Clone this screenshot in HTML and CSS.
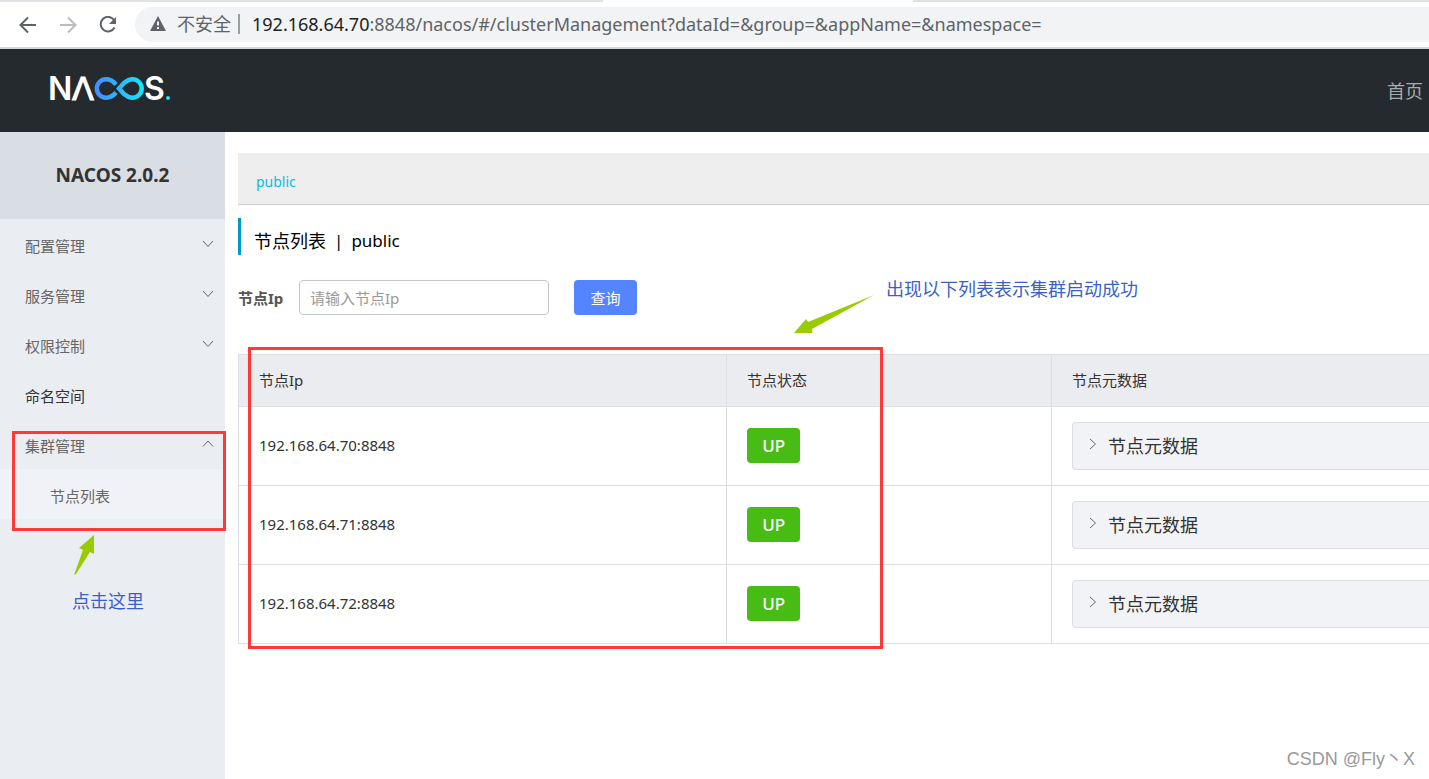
FILE: index.html
```html
<!DOCTYPE html>
<html lang="zh-CN">
<head>
<meta charset="utf-8">
<title>Nacos</title>
<link rel="stylesheet" href="styles.css">
</head>
<body>
<div class="browser">
  <div class="tab-strip"><span class="tab-side tab-left"></span><span class="tab-active"></span><span class="tab-side tab-right"></span></div>
  <div class="toolbar">
    <div class="nav-buttons">
      <button class="nav-button" aria-label="后退"><svg width="18" height="18" viewBox="0 0 18 18"><path d="M17 9H2M9 1.500L1.500 9L9 16.500"/></svg></button>
      <button class="nav-button disabled" aria-label="前进" disabled><svg width="18" height="18" viewBox="0 0 18 18"><path d="M1 9H16M9 1.500L16.500 9L9 16.500"/></svg></button>
      <button class="nav-button" aria-label="刷新"><svg width="20" height="18" viewBox="0 0 20 18"><path d="M15 4A7.300 7.300 0 1 0 15.500 11.500"/><path class="solid" d="M17 1V8H10Z"/></svg></button>
    </div>
    <div class="omnibox">
      <svg class="warning" width="16" height="15" viewBox="0 0 16 15"><path d="M8 0L16 15H0Z" fill="#5f6368"/><path d="M8 5.500V9.500M8 11V13" stroke="#f1f3f4" stroke-width="2"/></svg>
      <span class="insecure">不安全</span>
      <span class="divider"></span>
      <span class="url"><span class="host">192.168.64.70</span>:8848/nacos/#/clusterManagement?dataId=&amp;group=&amp;appName=&amp;namespace=</span>
    </div>
  </div>
</div>
<header class="header">
  <svg class="logo" width="130" height="41" viewBox="-4 -7 130 41" role="img" aria-label="NACOS.">
    <defs><linearGradient id="loop" x1="46" y1="0" x2="95" y2="0" gradientUnits="userSpaceOnUse"><stop offset="0" stop-color="#478aff"/><stop offset="1" stop-color="#13e8f7"/></linearGradient></defs>
    <text class="logo-text" x="-1" y="23">N</text>
    <text class="logo-text wide" x="23" y="23">Λ</text>
    <path d="M67 7.500C64 4 61 2.300 57 2.300A9.200 9.200 0 0 0 57 20.700C61 20.700 64 19 67 15.500M70 11.500L75 6C78 3.500 80 2.300 83.500 2.300A9.200 9.200 0 0 1 83.500 20.700C80 20.700 78 19.500 75 17Z" fill="none" stroke="url(#loop)" stroke-width="4.500"/>
    <text class="logo-text" x="95" y="23">S</text>
    <circle cx="119" cy="21" r="2" fill="#13e8f7"/>
  </svg>
  <a class="home-link" href="#">首页</a>
</header>
<div class="layout">
  <aside class="sidebar">
    <h1 class="product">NACOS 2.0.2</h1>
    <nav class="menu">
      <button class="menu-item">配置管理<svg class="chevron" width="12" height="8" viewBox="0 0 12 8"><path d="M1 1L6 6.500L11 1"/></svg></button>
      <button class="menu-item">服务管理<svg class="chevron" width="12" height="8" viewBox="0 0 12 8"><path d="M1 1L6 6.500L11 1"/></svg></button>
      <button class="menu-item">权限控制<svg class="chevron" width="12" height="8" viewBox="0 0 12 8"><path d="M1 1L6 6.500L11 1"/></svg></button>
      <a class="menu-item leaf" href="#">命名空间</a>
      <button class="menu-item">集群管理<svg class="chevron" width="12" height="8" viewBox="0 0 12 8"><path d="M1 6.500L6 1L11 6.500"/></svg></button>
      <a class="menu-item child" href="#">节点列表</a>
    </nav>
    <div class="mark mark-menu"></div>
    <svg class="arrow arrow-menu" width="22" height="42" viewBox="0 0 22 42"><path d="M20 0L5 13L9 15L0 40L2 39L16 17L20 19Z"/></svg>
    <p class="note note-menu">点击这里</p>
  </aside>
  <main class="main">
    <div class="namespaces"><a class="namespace" href="#">public</a></div>
    <h2 class="page-title"><span class="page-name">节点列表</span><span>|</span><span>public</span></h2>
    <form class="filter">
      <label class="filter-label" for="ip">节点Ip</label>
      <input class="filter-input" id="ip" type="text" placeholder="请输入节点Ip">
      <button class="search" type="button">查询</button>
    </form>
    <div class="table-area">
      <table class="nodes">
        <thead><tr><th class="col-ip">节点Ip</th><th class="col-state">节点状态</th><th>节点元数据</th></tr></thead>
        <tbody>
          <tr><td>192.168.64.70:8848</td><td><span class="state">UP</span></td><td class="meta-cell"><button class="meta"><svg class="chevron" width="8" height="12" viewBox="0 0 8 12"><path d="M1 1L6.500 6L1 11"/></svg>节点元数据</button></td></tr>
          <tr><td>192.168.64.71:8848</td><td><span class="state">UP</span></td><td class="meta-cell"><button class="meta"><svg class="chevron" width="8" height="12" viewBox="0 0 8 12"><path d="M1 1L6.500 6L1 11"/></svg>节点元数据</button></td></tr>
          <tr><td>192.168.64.72:8848</td><td><span class="state">UP</span></td><td class="meta-cell"><button class="meta"><svg class="chevron" width="8" height="12" viewBox="0 0 8 12"><path d="M1 1L6.500 6L1 11"/></svg>节点元数据</button></td></tr>
        </tbody>
      </table>
      <div class="mark mark-table"></div>
      <svg class="arrow arrow-table" width="80" height="40" viewBox="0 0 80 40"><path d="M0 38L12 24L14 27L80 0L18 34L18.500 38Z"/></svg>
      <p class="note note-table">出现以下列表表示集群启动成功</p>
    </div>
  </main>
</div>
<div class="watermark">CSDN @Fly丶X</div>
</body>
</html>
```
FILE: styles.css
```css
* { box-sizing: border-box; }
body {
  margin: 0;
  min-height: 100vh;
  display: flex;
  flex-direction: column;
  overflow-x: hidden;
  background: #fff;
  color: #333;
  font: 15px/20px "Noto Sans", "Noto Sans CJK SC", sans-serif;
}
button, input { font: inherit; }
button { border: 0; cursor: pointer; }
a { text-decoration: none; }

.browser { background: #fff; border-bottom: 2px solid #d5d7da; }
.tab-strip { display: flex; height: 2px; }
.tab-side { background: #dee1e6; }
.tab-left { flex: 603; }
.tab-active { flex: 310; }
.tab-right { flex: 516; }
.toolbar { display: flex; padding: 5px 0; }
.nav-buttons { display: flex; align-items: center; gap: 22px; padding-left: 19px; width: 135px; }
.nav-button { display: flex; padding: 0; background: none; }
.nav-button svg { fill: none; stroke: #5f6368; stroke-width: 2; }
.nav-button .solid { fill: #5f6368; stroke: none; }
.nav-button.disabled svg { stroke: #babcbe; }
.omnibox {
  flex: 1;
  display: flex;
  align-items: center;
  height: 35px;
  padding: 0 0 2px 15px;
  background: #f1f3f4;
  border-radius: 18px 0 0 18px;
  color: #5f6368;
  font-size: 18px;
  white-space: nowrap;
}
.insecure { margin-left: 11px; }
.divider { width: 2px; height: 20px; margin: 0 12px 0 7px; background: #9b9ea2; }
.host { color: #202124; }

.header {
  display: flex;
  align-items: center;
  justify-content: space-between;
  height: 83px;
  padding: 0 6px 0 45px;
  background: #252a2f;
}
.logo-text { fill: #fff; font: 600 32px Inter, sans-serif; }
.logo-text.wide { font: 400 32px "DejaVu Sans", sans-serif; stroke: #fff; stroke-width: 1; }
.home-link { color: #a8aaac; font-size: 18px; }

.layout { flex: 1; display: flex; }
.sidebar { position: relative; flex: 0 0 225px; background: #eaedf2; }
.product {
  margin: 0;
  height: 87px;
  background: #d9dde4;
  font-size: 19px;
  line-height: 87px;
  text-align: center;
}
.menu-item {
  display: flex;
  align-items: center;
  justify-content: space-between;
  width: 100%;
  height: 50px;
  padding: 4px 11px 0 25px;
  background: none;
  color: #666;
}
.menu-item.leaf { color: #333; }
.menu-item.child { padding-left: 50px; background: #f1f2f7; }
.chevron { fill: none; stroke: #666; stroke-width: 1; }
.menu .chevron { margin-bottom: 4px; }

.main { flex: 1; min-width: 0; padding: 21px 0 0 13px; }
.namespaces { height: 52px; padding: 18px; background: #eee; border-bottom: 1px solid #ccc; }
.namespace { color: #00c1de; font-size: 14px; }
.page-title {
  display: flex;
  gap: 8px;
  height: 37px;
  margin: 13px 0 25px;
  padding: 10px 0 0 13px;
  border-left: 3px solid #09c;
  color: #000;
  font-size: 17px;
  font-weight: 400;
  line-height: 26px;
}
.page-name { font-size: 18px; }
.filter { display: flex; align-items: center; height: 35px; margin-bottom: 39px; }
.filter-label { width: 61px; color: #555; font-weight: 700; }
.filter-input {
  width: 250px;
  height: 35px;
  padding: 0 10px;
  border: 1px solid #c4c6cf;
  border-radius: 4px;
}
.filter-input::placeholder { color: #999; }
.search {
  width: 63px;
  height: 35px;
  margin-left: 25px;
  padding: 0;
  border-radius: 4px;
  background: #5584ff;
  color: #fff;
}

.table-area { position: relative; }
.nodes { width: 100%; table-layout: fixed; border-collapse: collapse; }
.nodes th, .nodes td {
  padding: 0 20px 2px;
  border: 1px solid #dcdee3;
  border-right: 0;
  text-align: left;
  font-weight: 400;
}
.nodes th { height: 52px; background: #ebecf0; }
.nodes td { height: 79px; }
.col-ip { width: 41%; }
.col-state { width: 27.3%; }
.nodes .meta-cell { padding: 0 0 0 20px; }
.state {
  display: inline-block;
  width: 53px;
  border-radius: 4px;
  background: #46bc15;
  color: #fff;
  font-size: 17px;
  font-weight: 500;
  line-height: 35px;
  text-align: center;
}
.meta {
  display: flex;
  align-items: center;
  gap: 11px;
  width: 100%;
  height: 48px;
  padding: 0 16px;
  border: 1px solid #dcdee3;
  border-right: 0;
  border-radius: 4px 0 0 4px;
  background: #f2f3f7;
  color: #333;
  font-size: 18px;
}
.meta .chevron { margin-bottom: 5px; }

.mark { position: absolute; border: 3px solid #ff3838; pointer-events: none; }
.mark-menu { top: 299px; left: 12px; width: 214px; height: 100px; }
.mark-table { top: -7px; left: 10px; width: 635px; height: 302px; }
.arrow { position: absolute; fill: #9c0; }
.arrow-menu { top: 403px; left: 74px; }
.arrow-table { top: -59px; left: 556px; }
.note { position: absolute; margin: 0; color: #3a5fcd; font-size: 18px; white-space: nowrap; }
.note-menu { top: 459px; left: 72px; }
.note-table { top: -75px; left: 648px; }
.watermark {
  position: absolute;
  right: 14px;
  bottom: 10px;
  color: #999;
  font: 18px/20px "Liberation Sans", "Noto Sans CJK SC", sans-serif;
}
```
